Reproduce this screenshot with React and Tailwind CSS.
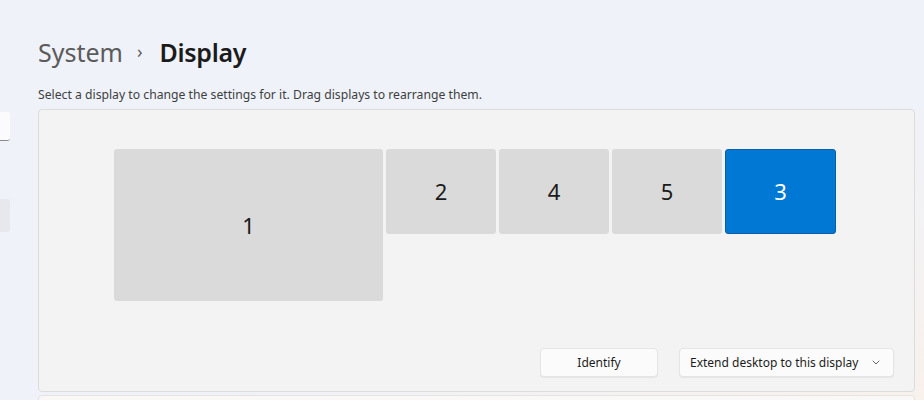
import React from 'react';

const Monitor = ({ label, className }) => (
  <div
    className={`flex items-center justify-center rounded-[3px] text-[22px] ${className}`}
  >
    {label}
  </div>
);

export default function App() {
  return (
    <div
      className="flex h-[400px] w-[924px] overflow-hidden bg-[radial-gradient(ellipse_at_bottom_right,#f8f1ec,#eff2f9_55%)] text-[#1b1b1b]"
      style={{ fontFamily: '"Noto Sans", "Open Sans", sans-serif' }}
    >
      {/* sidebar remnants */}
      <div className="flex w-[38px] shrink-0 flex-col">
        <div className="mt-[112px] h-[29px] w-[10px] rounded-r-[3px] border-b border-[#8a8a8a] bg-[#fbfbfd]" />
        <div className="mt-[58px] h-[33px] w-[10px] rounded-r-[3px] bg-[#e6e8ee]" />
      </div>

      <div className="flex flex-1 flex-col pr-[9px]">
        <div className="mt-[32px] flex h-[40px] shrink-0 items-center text-[25px] leading-none">
          <span className="text-[#5b5b5b]">System</span>
          <span className="ml-[14px] mr-[17px] mb-[2px] text-[18px] text-[#5b5b5b]">›</span>
          <span className="font-semibold tracking-[-0.3px] text-[#1b1b1b]">Display</span>
        </div>

        <p className="mt-[15px] shrink-0 text-[12.2px] leading-[16px] text-[#3e3e3e]">
          Select a display to change the settings for it. Drag displays to rearrange them.
        </p>

        <div className="mt-[6px] flex h-[283px] shrink-0 flex-col rounded-[4px] border border-[#dcdcdc] bg-[#f3f3f3]">
          <div className="ml-[75px] mt-[39px] flex items-start gap-[3px]">
            <Monitor label="1" className="h-[152px] w-[269px] bg-[#dadada] text-[#1b1b1b]" />
            <Monitor label="2" className="h-[85px] w-[110px] bg-[#dadada] text-[#1b1b1b]" />
            <Monitor label="4" className="h-[85px] w-[110px] bg-[#dadada] text-[#1b1b1b]" />
            <Monitor label="5" className="h-[85px] w-[110px] bg-[#dadada] text-[#1b1b1b]" />
            <Monitor
              label="3"
              className="h-[85px] w-[111px] border border-[#0a5da8] bg-[#0078d4] text-white"
            />
          </div>

          <div className="mt-auto mb-[14px] flex justify-end gap-[21px] pr-[20px]">
            <button className="h-[29px] w-[118px] rounded-[4px] border border-[#e5e5e5] bg-[#fbfbfb] text-[12px] text-[#1b1b1b] shadow-[0_1px_1px_rgba(0,0,0,0.06)]">
              Identify
            </button>
            <button className="flex h-[29px] w-[215px] items-center justify-between rounded-[4px] border border-[#e5e5e5] bg-[#fbfbfb] pl-[10px] pr-[13px] text-[12px] text-[#1b1b1b] shadow-[0_1px_1px_rgba(0,0,0,0.06)]">
              <span>Extend desktop to this display</span>
              <svg width="8" height="5" viewBox="0 0 8 5" fill="none">
                <path d="M1 1l3 3 3-3" stroke="#666" strokeWidth="1" strokeLinecap="round" strokeLinejoin="round" />
              </svg>
            </button>
          </div>
        </div>

        <div className="mt-[3px] h-[12px] shrink-0 rounded-t-[4px] border border-[#e6e3e1] bg-[#faf8f7]" />
      </div>
    </div>
  );
}
